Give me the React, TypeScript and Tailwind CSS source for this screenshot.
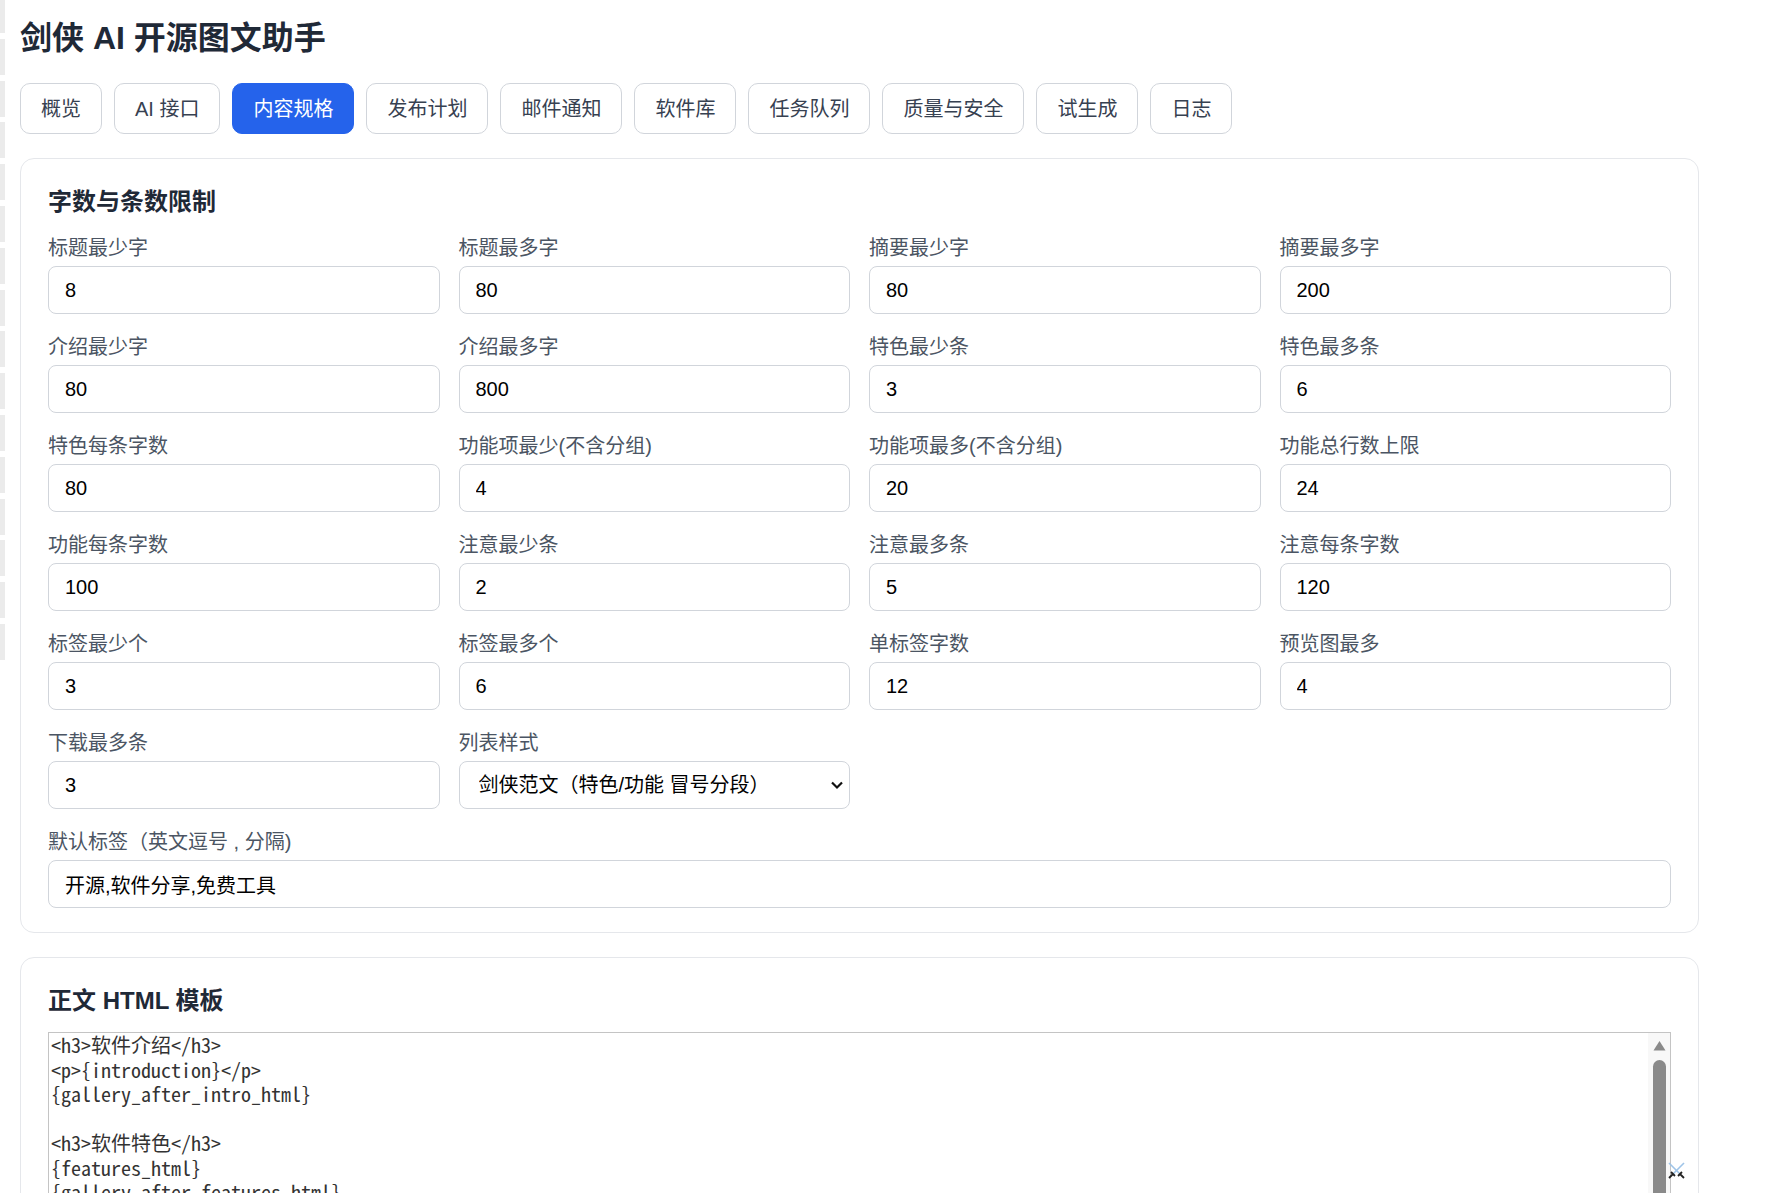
import { useState } from "react"

const tabs = ["概览", "AI 接口", "内容规格", "发布计划", "邮件通知", "软件库", "任务队列", "质量与安全", "试生成", "日志"]

const fields = [
  { label: "标题最少字", value: "8" },
  { label: "标题最多字", value: "80" },
  { label: "摘要最少字", value: "80" },
  { label: "摘要最多字", value: "200" },
  { label: "介绍最少字", value: "80" },
  { label: "介绍最多字", value: "800" },
  { label: "特色最少条", value: "3" },
  { label: "特色最多条", value: "6" },
  { label: "特色每条字数", value: "80" },
  { label: "功能项最少(不含分组)", value: "4" },
  { label: "功能项最多(不含分组)", value: "20" },
  { label: "功能总行数上限", value: "24" },
  { label: "功能每条字数", value: "100" },
  { label: "注意最少条", value: "2" },
  { label: "注意最多条", value: "5" },
  { label: "注意每条字数", value: "120" },
  { label: "标签最少个", value: "3" },
  { label: "标签最多个", value: "6" },
  { label: "单标签字数", value: "12" },
  { label: "预览图最多", value: "4" },
  { label: "下载最多条", value: "3" },
]

const template = `<h3>软件介绍</h3>
<p>{introduction}</p>
{gallery_after_intro_html}

<h3>软件特色</h3>
{features_html}
{gallery_after_features_html}

<h3>软件功能</h3>
{functions_html}

<h3>注意事项</h3>
{notes_html}`

const font = "font-['Liberation_Sans','Noto_Sans_CJK_SC',sans-serif]"

function Field({ label, value }: { label: string; value: string }) {
  const [v, setV] = useState(value)
  return (
    <div className="flex flex-col">
      <label className="text-[20px] leading-[30px] text-[#4b5563] mb-[3px]">{label}</label>
      <input
        value={v}
        onChange={(e) => setV(e.target.value)}
        className="h-[48px] border border-[#d1d5db] rounded-[8px] px-[16px] text-[20px] text-black bg-white outline-none"
      />
    </div>
  )
}

export default function App() {
  const [active, setActive] = useState(2)

  return (
    <div className={`relative min-h-screen bg-white ${font}`}>
      {/* grey strips peeking at the left edge */}
      {[...Array(16)].map((_, i) => (
        <div
          key={i}
          className="absolute left-0 w-[5px] h-[36px] bg-[#ebebeb]"
          style={{ top: i * 41.8 - 3 }}
        />
      ))}

      <div className="w-[1699px] pl-[20px] pt-[18px]">
        <h1 className="text-[32px] leading-[40px] font-bold text-[#1f2937]">剑侠 AI 开源图文助手</h1>

        <div className="flex gap-[12px] mt-[25px]">
          {tabs.map((t, i) => (
            <button
              key={t}
              onClick={() => setActive(i)}
              className={
                i === active
                  ? "h-[51px] px-[20px] rounded-[10px] border border-[#2563eb] bg-[#2563eb] text-white text-[20px]"
                  : "h-[51px] px-[20px] rounded-[10px] border border-[#d1d5db] bg-white text-[#374151] text-[20px]"
              }
            >
              {t}
            </button>
          ))}
        </div>

        <section className="mt-[24px] border border-[#e5e7eb] rounded-[14px] px-[27px] pt-[26px] pb-[24px]">
          <h2 className="text-[24px] leading-[34px] font-bold text-[#1f2937] mb-[14px]">字数与条数限制</h2>
          <div className="grid grid-cols-4 gap-x-[19px] gap-y-[18px]">
            {fields.map((f) => (
              <Field key={f.label} label={f.label} value={f.value} />
            ))}
            <div className="flex flex-col">
              <label className="text-[20px] leading-[30px] text-[#4b5563] mb-[3px]">列表样式</label>
              <div className="relative">
                <select className="w-full h-[48px] appearance-none border border-[#d1d5db] rounded-[8px] pl-[19px] pr-[40px] text-[20px] text-black bg-white outline-none">
                  <option>剑侠范文（特色/功能 冒号分段）</option>
                </select>
                <svg
                  className="absolute right-[6px] top-[17px] pointer-events-none"
                  width="14"
                  height="14"
                  viewBox="0 0 14 14"
                  fill="none"
                  stroke="#111"
                  strokeWidth="2.2"
                >
                  <path d="M2 4.5 7 9.5 12 4.5" />
                </svg>
              </div>
            </div>
            <div className="col-span-4">
              <Field label="默认标签（英文逗号 , 分隔)" value="开源,软件分享,免费工具" />
            </div>
          </div>
        </section>

        <section className="mt-[24px] border border-[#e5e7eb] rounded-[14px] px-[27px] pt-[26px] pb-[24px]">
          <h2 className="text-[24px] leading-[34px] font-bold text-[#1f2937] mb-[14px]">正文 HTML 模板</h2>
          <div className="flex h-[320px] border border-[#c4c4c4]">
            <textarea
              defaultValue={template}
              spellCheck={false}
              className="flex-1 resize-none overflow-hidden px-[2px] pt-0 text-[20px] leading-[24.5px] text-[#333] outline-none font-['Noto_Sans_Mono_CJK_SC','Liberation_Mono','Noto_Sans_CJK_SC',monospace]"
            />
            <div className="w-[22px] bg-[#f8f8f8] flex flex-col items-center pt-[7px]">
              <svg width="13" height="11" viewBox="0 0 13 11">
                <path d="M6.5 1 12.5 10.5H0.5Z" fill="#8a8a8a" />
              </svg>
              <div className="mt-[9px] w-[13px] flex-1 rounded-t-full bg-[#8a8a8a]" />
            </div>
          </div>
        </section>
      </div>

      {/* small crossed-swords mark */}
      <svg className="absolute left-[1667px] top-[1161px]" width="19" height="19" viewBox="0 0 19 19">
        <path d="M2 2 13 13" stroke="#9fc4e8" strokeWidth="1.6" />
        <path d="M17 2 6 13" stroke="#9fc4e8" strokeWidth="1.6" />
        <path d="M11 15 15 11M13 13 17 17" stroke="#222" strokeWidth="1.8" />
        <path d="M8 15 4 11M6 13 2 17" stroke="#222" strokeWidth="1.8" />
      </svg>
    </div>
  )
}
